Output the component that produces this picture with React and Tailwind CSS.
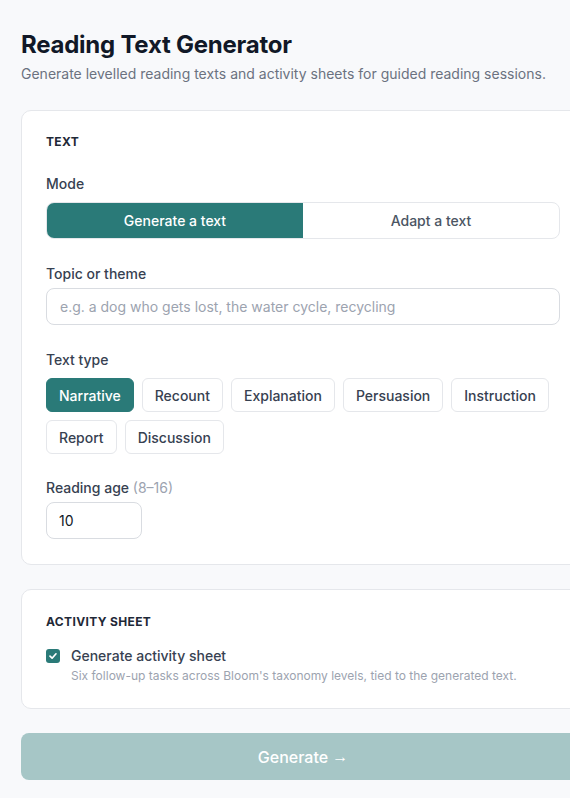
import React, { useState } from "react";

const chips = ["Narrative", "Recount", "Explanation", "Persuasion", "Instruction", "Report", "Discussion"];

export default function App() {
  const [mode, setMode] = useState("generate");
  const [type, setType] = useState("Narrative");
  const [checked, setChecked] = useState(true);

  return (
    <div
      className="h-screen w-full overflow-hidden bg-[#f8f9fb] text-[#111827]"
      style={{ fontFamily: "Inter, 'Noto Sans', sans-serif" }}
    >
      <div className="ml-[21px] w-[564px] pt-[30px]">
        <h1 className="text-[24px] leading-[30px] font-bold tracking-[-0.01em] text-[#111827]">
          Reading Text Generator
        </h1>
        <p className="mt-[4px] text-[14px] leading-[20px] text-[#6b7280]">
          Generate levelled reading texts and activity sheets for guided reading sessions.
        </p>

        <div className="mt-[26px] rounded-[10px] border border-[#e5e7eb] bg-white px-6 pt-6 pb-[25px]">
          <div className="text-[12px] leading-[14px] font-bold tracking-[0.03em] text-[#1f2937]">TEXT</div>

          <div className="mt-[25px] text-[14px] leading-[20px] font-medium text-[#374151]">Mode</div>
          <div className="mt-2 flex h-[37px] rounded-lg border border-[#e5e7eb] bg-white">
            <button
              onClick={() => setMode("generate")}
              className={
                mode === "generate"
                  ? "flex-1 rounded-l-[7px] bg-[#2a7a78] text-[14px] font-medium text-white"
                  : "flex-1 rounded-l-[7px] text-[14px] font-medium text-[#4b5563]"
              }
            >
              Generate a text
            </button>
            <button
              onClick={() => setMode("adapt")}
              className={
                mode === "adapt"
                  ? "flex-1 rounded-r-[7px] bg-[#2a7a78] text-[14px] font-medium text-white"
                  : "flex-1 rounded-r-[7px] text-[14px] font-medium text-[#4b5563]"
              }
            >
              Adapt a text
            </button>
          </div>

          <div className="mt-[25px] text-[14px] leading-[20px] font-medium text-[#374151]">Topic or theme</div>
          <input
            className="mt-1 block h-[37px] w-full rounded-lg border border-[#d9dce1] px-[13px] text-[14px] text-[#111827] placeholder:text-[#9ca3af] outline-none"
            placeholder="e.g. a dog who gets lost, the water cycle, recycling"
          />

          <div className="mt-[25px] text-[14px] leading-[20px] font-medium text-[#374151]">Text type</div>
          <div className="mt-2 flex flex-wrap gap-2">
            {chips.map((c) => (
              <button
                key={c}
                onClick={() => setType(c)}
                className={
                  type === c
                    ? "h-[34px] rounded-md border border-[#2a7a78] bg-[#2a7a78] px-3 text-[14px] font-medium text-white"
                    : "h-[34px] rounded-md border border-[#e5e7eb] bg-white px-3 text-[14px] font-medium text-[#374151]"
                }
              >
                {c}
              </button>
            ))}
          </div>

          <div className="mt-[24px] text-[14px] leading-[20px] font-medium text-[#374151]">
            Reading age <span className="font-normal text-[#9ca3af]">(8–16)</span>
          </div>
          <input
            className="mt-1 block h-[37px] w-[96px] rounded-lg border border-[#d9dce1] px-[12px] text-[14px] text-[#111827] outline-none"
            defaultValue="10"
          />
        </div>

        <div className="mt-6 rounded-[10px] border border-[#e5e7eb] bg-white px-6 pt-[25px] pb-6">
          <div className="text-[12px] leading-[14px] font-bold tracking-[0.03em] text-[#1f2937]">ACTIVITY SHEET</div>
          <label className="mt-[17px] flex items-start gap-[11px]">
            <button
              onClick={() => setChecked(!checked)}
              className={
                checked
                  ? "mt-[3px] flex h-[14px] w-[14px] items-center justify-center rounded-[3px] bg-[#2a7a78]"
                  : "mt-[3px] flex h-[14px] w-[14px] items-center justify-center rounded-[3px] border border-[#9ca3af] bg-white"
              }
            >
              {checked && (
                <svg width="10" height="10" viewBox="0 0 10 10" fill="none">
                  <path d="M2 5.2 L4.1 7.2 L8 2.8" stroke="white" strokeWidth="1.7" strokeLinecap="round" strokeLinejoin="round" />
                </svg>
              )}
            </button>
            <div>
              <div className="text-[14px] leading-[20px] font-medium text-[#374151]">Generate activity sheet</div>
              <div className="mt-[2px] text-[12px] leading-[16px] text-[#9ca3af]">
                Six follow-up tasks across Bloom's taxonomy levels, tied to the generated text.
              </div>
            </div>
          </label>
        </div>

        <button className="mt-6 flex h-[47px] w-full items-center justify-center rounded-lg bg-[#2a7a78]/40 text-[16px] font-medium text-white">
          Generate <span className="ml-[4px]" style={{ fontFamily: "'Liberation Sans', sans-serif" }}>→</span>
        </button>
      </div>
    </div>
  );
}
